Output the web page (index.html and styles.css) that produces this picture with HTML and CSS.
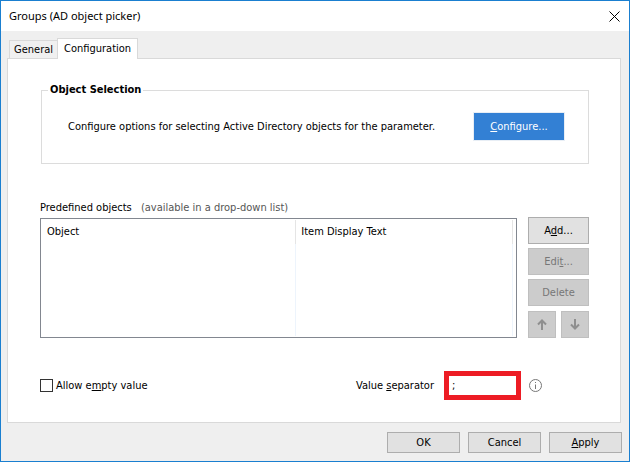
FILE: index.html
```html
<!DOCTYPE html>
<html lang="en">
<head>
  <meta charset="UTF-8" />
  <meta name="viewport" content="width=device-width, initial-scale=1.0" />
  <title>Groups (AD object picker)</title>
  <link rel="stylesheet" href="styles.css">
</head>
<body>
  <div class="window">
    <header class="titlebar">
      <h1>Groups (AD object picker)</h1>
      <button type="button" class="close-btn" aria-label="Close">
        <svg width="11" height="11" viewBox="0 0 11 11"><path d="M0.5 0.5L10.5 10.5M10.5 0.5L0.5 10.5" stroke="#000" fill="none" /></svg>
      </button>
    </header>

    <nav class="tabs">
      <button type="button" class="tab">General</button>
      <button type="button" class="tab active">Configuration</button>
    </nav>

    <main class="panel">
      <fieldset class="group">
        <legend>Object Selection</legend>
        <div class="group-row">
          <span>Configure options for selecting Active Directory objects for the parameter.</span>
          <button type="button" class="configure-btn"><u>C</u>onfigure...</button>
        </div>
      </fieldset>

      <p class="list-label">Predefined objects <span class="hint">(available in a drop-down list)</span></p>
      <div class="list-row">
        <div class="list">
          <table class="objects">
            <thead>
              <tr><th>Object</th><th>Item Display Text</th></tr>
            </thead>
            <tbody>
              <tr><td></td><td></td></tr>
            </tbody>
          </table>
        </div>
        <div class="list-actions">
          <button type="button" class="btn">A<u>d</u>d...</button>
          <button type="button" class="btn" disabled>Edi<u>t</u>...</button>
          <button type="button" class="btn" disabled>Delete</button>
          <div class="move-btns">
            <button type="button" class="btn" aria-label="Move up" disabled>
              <svg width="10" height="11" viewBox="0 0 10 11"><path d="M5 11V2M1 5.5L5 1.5L9 5.5" stroke="#8f8f8f" stroke-width="2" fill="none" /></svg>
            </button>
            <button type="button" class="btn" aria-label="Move down" disabled>
              <svg width="10" height="11" viewBox="0 0 10 11"><path d="M5 0V9M1 5.5L5 9.5L9 5.5" stroke="#8f8f8f" stroke-width="2" fill="none" /></svg>
            </button>
          </div>
        </div>
      </div>

      <div class="options">
        <label class="check"><input type="checkbox" /> <span>Allow e<u>m</u>pty value</span></label>
        <div class="separator">
          <label for="separator">Value <u>s</u>eparator</label>
          <input type="text" id="separator" value=";" />
          <svg width="13" height="13" viewBox="0 0 13 13"><circle cx="6.5" cy="6.5" r="6" stroke="#777" fill="none" /><path d="M6.5 5.5V10M6.5 3V4" stroke="#777" /></svg>
        </div>
      </div>
    </main>

    <footer class="buttons">
      <button type="button" class="btn">OK</button>
      <button type="button" class="btn">Cancel</button>
      <button type="button" class="btn"><u>A</u>pply</button>
    </footer>
  </div>
</body>
</html>
```

FILE: styles.css
```css
* {
  box-sizing: border-box;
}
body {
  margin: 0;
  font-family: "DejaVu Sans Condensed", Tahoma, sans-serif;
  font-size: 11px;
  line-height: 14px;
  color: #000;
}
button,
input {
  font: inherit;
  color: inherit;
  margin: 0;
  padding: 0;
}
u {
  text-underline-offset: 1px;
  text-decoration-skip-ink: none;
}
.window {
  display: flex;
  flex-direction: column;
  min-height: 100vh;
  border: 1px solid #1a7fd0;
  background: #efefef;
}
.titlebar {
  display: flex;
  align-items: center;
  justify-content: space-between;
  height: 30px;
  padding: 0 9px 0 8px;
  background: #fff;
}
.titlebar h1 {
  margin: 0;
  font-family: "Noto Sans", "Segoe UI", sans-serif;
  font-size: 11px;
  font-weight: normal;
}
.close-btn {
  display: flex;
  padding: 0;
  border: none;
  background: none;
}
.tabs {
  display: flex;
  align-items: flex-end;
  padding: 7px 8px 0;
}
.tab {
  height: 18px;
  padding: 0 4px;
  border: 1px solid #d9d9d9;
  border-right: none;
  border-bottom: none;
  background: #f0f0f0;
}
.tab.active {
  height: 21px;
  margin-bottom: -1px;
  padding: 0 6px;
  border-right: 1px solid #d9d9d9;
  background: #fff;
  z-index: 1;
}
.panel {
  flex: 1;
  margin: 0 8px 0 6px;
  padding: 24px 31px 22px 32px;
  border: 1px solid #d9d9d9;
  background: #fff;
}
.group {
  margin: 0 0 0 1px;
  padding: 0 23px 22px 26px;
  border: 1px solid #dcdcdc;
}
.group legend {
  margin-left: -20px;
  padding: 0 2px;
  font-weight: bold;
}
.group-row {
  display: flex;
  align-items: center;
  justify-content: space-between;
  padding-top: 15px;
}
.configure-btn {
  width: 92px;
  height: 29px;
  border: 1px solid #e8eef5;
  background: #3380d4;
  color: #fff;
}
.list-label {
  margin: 37px 0 2px;
}
.hint {
  margin-left: 6px;
  color: #555;
}
.list-row {
  display: flex;
  gap: 11px;
}
.list {
  flex: 1;
  display: flex;
  height: 120px;
  margin-top: 1px;
  padding: 1px 3px 1px 1px;
  border: 1px solid #828790;
}
.objects {
  width: 100%;
  border-collapse: separate;
  border-spacing: 0;
}
.objects th,
.objects td {
  padding: 0 5px;
  border-right: 1px solid #e5e5e5;
  text-align: left;
  font-weight: normal;
}
.objects th {
  height: 24px;
}
.objects th:first-child {
  width: 54%;
}
.objects td {
  border-color: #edf4fc;
}
.list-actions {
  display: flex;
  flex-direction: column;
  gap: 4px;
  width: 61px;
}
.btn {
  height: 27px;
  border: 1px solid #adadad;
  background: #e1e1e1;
}
.btn:disabled {
  border-color: #bfbfbf;
  background: #ccc;
  color: #777;
}
.move-btns {
  display: flex;
  gap: 5px;
  margin-top: 1px;
}
.move-btns .btn {
  display: flex;
  flex: 1;
  align-items: center;
  justify-content: center;
}
.options {
  display: flex;
  align-items: center;
  justify-content: space-between;
  margin-top: 33px;
  padding-right: 47px;
}
.check {
  display: flex;
  align-items: center;
  gap: 3px;
}
.check input {
  appearance: none;
  width: 13px;
  height: 13px;
  border: 1px solid #333;
  background: #fff;
}
.separator {
  display: flex;
  align-items: center;
}
.separator input {
  width: 77px;
  height: 29px;
  margin: 0 8px 0 10px;
  padding: 0 3px;
  border: 5px solid #ed1c24;
}
.buttons {
  display: flex;
  justify-content: flex-end;
  gap: 8px;
  padding: 9px 7px 8px;
}
.buttons .btn {
  width: 73px;
  height: 21px;
}
```
